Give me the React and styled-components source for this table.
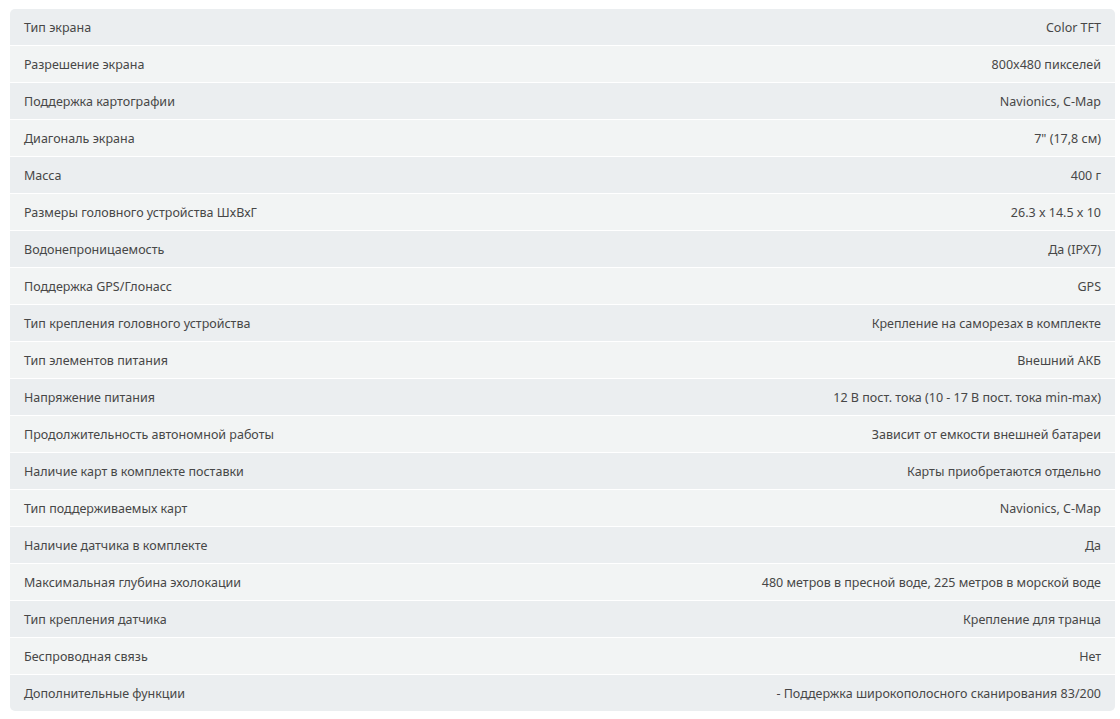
import React from "react";
import styled, { createGlobalStyle } from "styled-components";

const Global = createGlobalStyle`
  html, body { margin: 0; padding: 0; background: #ffffff; }
  body { font-family: "Noto Sans", "Open Sans", sans-serif; }
`;

const Page = styled.div`
  padding: 9px 5px 0 10px;
`;

const Table = styled.div`
  display: flex;
  flex-direction: column;
  gap: 1px;
  border-radius: 5px;
  overflow: hidden;
  background: #ffffff;
`;

const Row = styled.div`
  display: flex;
  justify-content: space-between;
  align-items: center;
  height: 36px;
  padding: 0 14px;
  background: ${(p) => (p.$odd ? "#ebeef0" : "#f2f4f4")};
  font-size: 12.5px;
  color: #474747;
`;

const Name = styled.span``;
const Value = styled.span`
  text-align: right;
`;

const rows = [
  ["Тип экрана", "Color TFT"],
  ["Разрешение экрана", "800x480 пикселей"],
  ["Поддержка картографии", "Navionics, C-Map"],
  ["Диагональ экрана", "7\" (17,8 см)"],
  ["Масса", "400 г"],
  ["Размеры головного устройства ШхВхГ", "26.3 x 14.5 x 10"],
  ["Водонепроницаемость", "Да (IPX7)"],
  ["Поддержка GPS/Глонасс", "GPS"],
  ["Тип крепления головного устройства", "Крепление на саморезах в комплекте"],
  ["Тип элементов питания", "Внешний АКБ"],
  ["Напряжение питания", "12 В пост. тока (10 - 17 В пост. тока min-max)"],
  ["Продолжительность автономной работы", "Зависит от емкости внешней батареи"],
  ["Наличие карт в комплекте поставки", "Карты приобретаются отдельно"],
  ["Тип поддерживаемых карт", "Navionics, C-Map"],
  ["Наличие датчика в комплекте", "Да"],
  ["Максимальная глубина эхолокации", "480 метров в пресной воде, 225 метров в морской воде"],
  ["Тип крепления датчика", "Крепление для транца"],
  ["Беспроводная связь", "Нет"],
  ["Дополнительные функции", "- Поддержка широкополосного сканирования 83/200"],
];

export default function App() {
  return (
    <>
      <Global />
      <Page>
        <Table>
          {rows.map(([n, v], i) => (
            <Row key={i} $odd={i % 2 === 0}>
              <Name>{n}</Name>
              <Value>{v}</Value>
            </Row>
          ))}
        </Table>
      </Page>
    </>
  );
}
